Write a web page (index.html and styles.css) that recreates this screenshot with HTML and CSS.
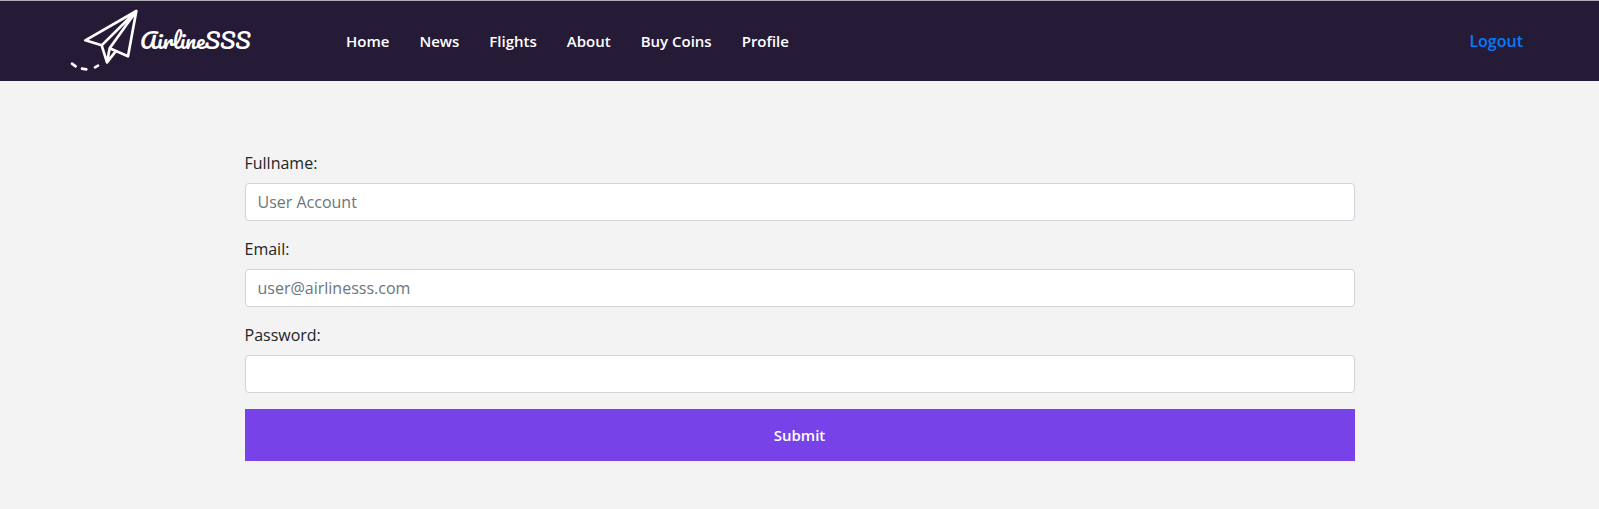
FILE: index.html
```html
<!DOCTYPE html>
<html lang="en">
<head>
<meta charset="utf-8">
<meta name="viewport" content="width=device-width, initial-scale=1">
<title>AirlineSSS</title>
<link rel="stylesheet" href="styles.css">
</head>
<body>
<header class="header">
  <a class="brand" href="#">
    <svg class="brand-icon" viewBox="30 27 210 192" fill="none" stroke="#fff" stroke-width="8" stroke-linecap="round" stroke-linejoin="round" aria-hidden="true">
      <path d="M229 33 76 121 125 136ZM229 33 204 169 149 145ZM125 136 141 187 149 145M141 187 167 154"/>
      <path d="M36 191 47 199M66 206 79 208M105 202 114 197"/>
    </svg>
    <span class="brand-name">AirlineSSS</span>
  </a>
  <nav class="nav">
    <a href="#">Home</a>
    <a href="#">News</a>
    <a href="#">Flights</a>
    <a href="#">About</a>
    <a href="#">Buy Coins</a>
    <a href="#">Profile</a>
  </nav>
  <a class="logout" href="#">Logout</a>
</header>
<main class="container">
  <form>
    <div class="field">
      <label for="fullname">Fullname:</label>
      <input id="fullname" type="text" placeholder="User Account">
    </div>
    <div class="field">
      <label for="email">Email:</label>
      <input id="email" type="email" placeholder="user@airlinesss.com">
    </div>
    <div class="field">
      <label for="password">Password:</label>
      <input id="password" type="password">
    </div>
    <button class="submit" type="submit">Submit</button>
  </form>
</main>
</body>
</html>
```

FILE: styles.css
```css
* {
  box-sizing: border-box;
}

body {
  margin: 0;
  background: #f3f3f3;
  color: #212529;
  font: 400 16px/24px "Open Sans", sans-serif;
}

a {
  text-decoration: none;
}

.header {
  display: flex;
  align-items: center;
  min-height: 81px;
  padding: 0 76px 0 70px;
  border-top: 1px solid #b0afb3;
  background: #261b37;
}

.brand {
  display: flex;
  align-items: center;
  flex: 0 0 276px;
  color: #fff;
}

.brand-icon {
  width: 70px;
  height: 64px;
}

.brand-name {
  padding-bottom: 2px;
  font: 400 22px/32px Pacifico, Lato, cursive;
}

.nav {
  display: flex;
  flex-wrap: wrap;
  gap: 30px;
  font-size: 15px;
  font-weight: 600;
}

.nav a {
  color: #fff;
}

.logout {
  margin-left: auto;
  color: #007bff;
  font-weight: 600;
}

.container {
  max-width: 1140px;
  margin: 0 auto;
  padding: 70px 15px 48px;
}

.field {
  margin-bottom: 16px;
}

.field label {
  display: block;
  margin-bottom: 8px;
}

.field input {
  display: block;
  width: 100%;
  height: 38px;
  padding: 6px 12px;
  border: 1px solid #ced4da;
  border-radius: 4px;
  background: #fff;
  color: #495057;
  font: inherit;
}

.field input::placeholder {
  color: #6c757d;
}

.submit {
  display: block;
  width: 100%;
  padding: 14px;
  border: 0;
  background: #7743e9;
  color: #fff;
  font: 600 15px/24px "Open Sans", sans-serif;
}
```
